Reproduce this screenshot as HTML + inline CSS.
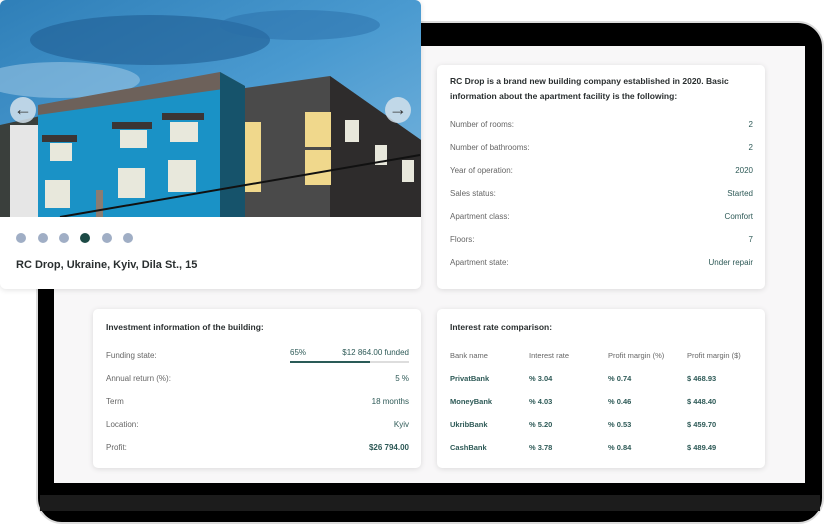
<!DOCTYPE html>
<html><head><style>
*{margin:0;padding:0;box-sizing:border-box}
body{width:825px;height:525px;background:#fff;position:relative;overflow:hidden;font-family:"Liberation Sans",sans-serif;color:#2f3536}
.dev{position:absolute;left:36px;top:21px;width:788px;height:503px;border-radius:26px;background:#000;border:2px solid #dcdcdc}
.scr{position:absolute;left:54px;top:46px;width:751px;height:437px;background:#f8f7f8}
.strip{position:absolute;left:40px;top:495px;width:780px;height:16px;background:#1c1c1c}
.card{position:absolute;background:#fff;border-radius:5px;box-shadow:0 1px 6px rgba(0,0,0,.12)}
.row{display:flex;justify-content:space-between;font-size:8px;color:#666;height:23px;align-items:center}
.row b{font-weight:normal;color:#2e5a57}
h3{font-size:8.5px;font-weight:bold;color:#2a2f30;line-height:16px}
.tbl{display:grid;grid-template-columns:79px 79px 79px 70px;font-size:7.5px}
.tbl div{height:23px;display:flex;align-items:center}
.g{color:#666}.b{color:#2e5a57;font-weight:bold}
.dot{position:absolute;top:233px;width:10px;height:10px;border-radius:50%;background:#a0aec5}
.arr{position:absolute;top:97px;width:26px;height:26px;border-radius:50%;background:rgba(210,225,235,.85);color:#333;font-size:18px;text-align:center;line-height:24px}
</style></head><body>
<div class="dev"></div>
<div class="strip"></div>
<div class="scr"></div>

<div class="card" style="left:0;top:0;width:421px;height:289px;overflow:hidden;border-radius:6px">
 <svg width="421" height="217" style="position:absolute;left:0;top:0">
  <defs><linearGradient id="sky" x1="0" y1="0" x2="1" y2="1"><stop offset="0" stop-color="#2f7fb8"/><stop offset=".5" stop-color="#4a9ad0"/><stop offset="1" stop-color="#7ab6de"/></linearGradient></defs>
  <rect width="421" height="217" fill="url(#sky)"/>
  <ellipse cx="150" cy="40" rx="120" ry="25" fill="#1f5e93" opacity=".6"/>
  <ellipse cx="300" cy="25" rx="80" ry="15" fill="#2a6ea8" opacity=".5"/>
  <ellipse cx="60" cy="80" rx="80" ry="18" fill="#a9d0ea" opacity=".5"/>
  <polygon points="0,125 45,115 45,217 0,217" fill="#3a3f3c"/>
  <rect x="10" y="125" width="35" height="92" fill="#e6e6e6"/>
  <polygon points="38,105 220,73 245,86 245,217 38,217" fill="#1a92c6"/>
  <polygon points="38,105 220,72 245,86 38,115" fill="#6d615a"/>
  <polygon points="220,72 245,86 245,217 220,217" fill="#16536b"/>
  <polygon points="245,88 330,76 421,140 421,217 245,217" fill="#4a4a4a"/>
  <polygon points="330,76 421,140 421,217 330,217" fill="#2e2c2c"/>
  <rect x="305" y="112" width="26" height="35" fill="#f0d88c"/>
  <rect x="305" y="150" width="26" height="35" fill="#f0d88c"/>
  <rect x="245" y="122" width="16" height="70" fill="#f0d88c"/>
  <g fill="#e8e8dc"><rect x="50" y="143" width="22" height="18"/><rect x="120" y="130" width="27" height="18"/><rect x="170" y="122" width="28" height="20"/><rect x="45" y="180" width="25" height="28"/><rect x="118" y="168" width="27" height="30"/><rect x="168" y="160" width="28" height="32"/><rect x="345" y="120" width="14" height="22"/><rect x="375" y="145" width="12" height="20"/><rect x="402" y="160" width="12" height="22"/></g>
  <g fill="#3b3535"><rect x="42" y="135" width="35" height="7"/><rect x="112" y="122" width="40" height="7"/><rect x="162" y="113" width="42" height="7"/></g>
  <rect x="96" y="190" width="7" height="27" fill="#8a7c72"/>
  <path d="M60 217 L420 155" stroke="#111" stroke-width="2"/>
 </svg>
 <div class="arr" style="left:10px">&#8592;</div>
 <div class="arr" style="left:385px">&#8594;</div>
 <div class="dot" style="left:16px"></div><div class="dot" style="left:38px"></div><div class="dot" style="left:59px"></div><div class="dot" style="left:80px;background:#1c4a45"></div><div class="dot" style="left:102px"></div><div class="dot" style="left:123px"></div>
 <div style="position:absolute;left:16px;top:259px;font-size:11px;font-weight:bold;color:#2a2f30">RC Drop, Ukraine, Kyiv, Dila St., 15</div>
</div>

<div class="card" style="left:437px;top:65px;width:328px;height:224px;padding:9px 12px 0 13px">
 <h3 style="line-height:15px">RC Drop is a brand new building company established in 2020. Basic information about the apartment facility is the following:</h3>
 <div style="margin-top:9px">
 <div class="row">Number of rooms:<b>2</b></div>
 <div class="row">Number of bathrooms:<b>2</b></div>
 <div class="row">Year of operation:<b>2020</b></div>
 <div class="row">Sales status:<b>Started</b></div>
 <div class="row">Apartment class:<b>Comfort</b></div>
 <div class="row">Floors:<b>7</b></div>
 <div class="row">Apartment state:<b>Under repair</b></div>
 </div>
</div>

<div class="card" style="left:93px;top:309px;width:328px;height:159px;padding:10px 12px 0 13px">
 <h3>Investment information of the building:</h3>
 <div style="margin-top:9px">
 <div class="row" style="position:relative">Funding state:<span style="width:119px;display:flex;justify-content:space-between;color:#2e5a57;margin-top:-6px"><span>65%</span><span>$12 864.00 funded</span></span>
  <div style="position:absolute;right:0;top:17px;width:119px;height:2px;background:#ddd"><div style="width:80px;height:2px;background:#2a5b57"></div></div></div>
 <div class="row">Annual return (%):<b>5 %</b></div>
 <div class="row">Term<b>18 months</b></div>
 <div class="row">Location:<b>Kyiv</b></div>
 <div class="row">Profit:<b style="font-weight:bold">$26 794.00</b></div>
 </div>
</div>

<div class="card" style="left:437px;top:309px;width:328px;height:159px;padding:10px 12px 0 13px">
 <h3>Interest rate comparison:</h3>
 <div class="tbl" style="margin-top:9px">
  <div class="g">Bank name</div><div class="g">Interest rate</div><div class="g">Profit margin (%)</div><div class="g">Profit margin ($)</div>
  <div class="b">PrivatBank</div><div class="b">% 3.04</div><div class="b">% 0.74</div><div class="b">$ 468.93</div>
  <div class="b">MoneyBank</div><div class="b">% 4.03</div><div class="b">% 0.46</div><div class="b">$ 448.40</div>
  <div class="b">UkribBank</div><div class="b">% 5.20</div><div class="b">% 0.53</div><div class="b">$ 459.70</div>
  <div class="b">CashBank</div><div class="b">% 3.78</div><div class="b">% 0.84</div><div class="b">$ 489.49</div>
 </div>
</div>
</body></html>
